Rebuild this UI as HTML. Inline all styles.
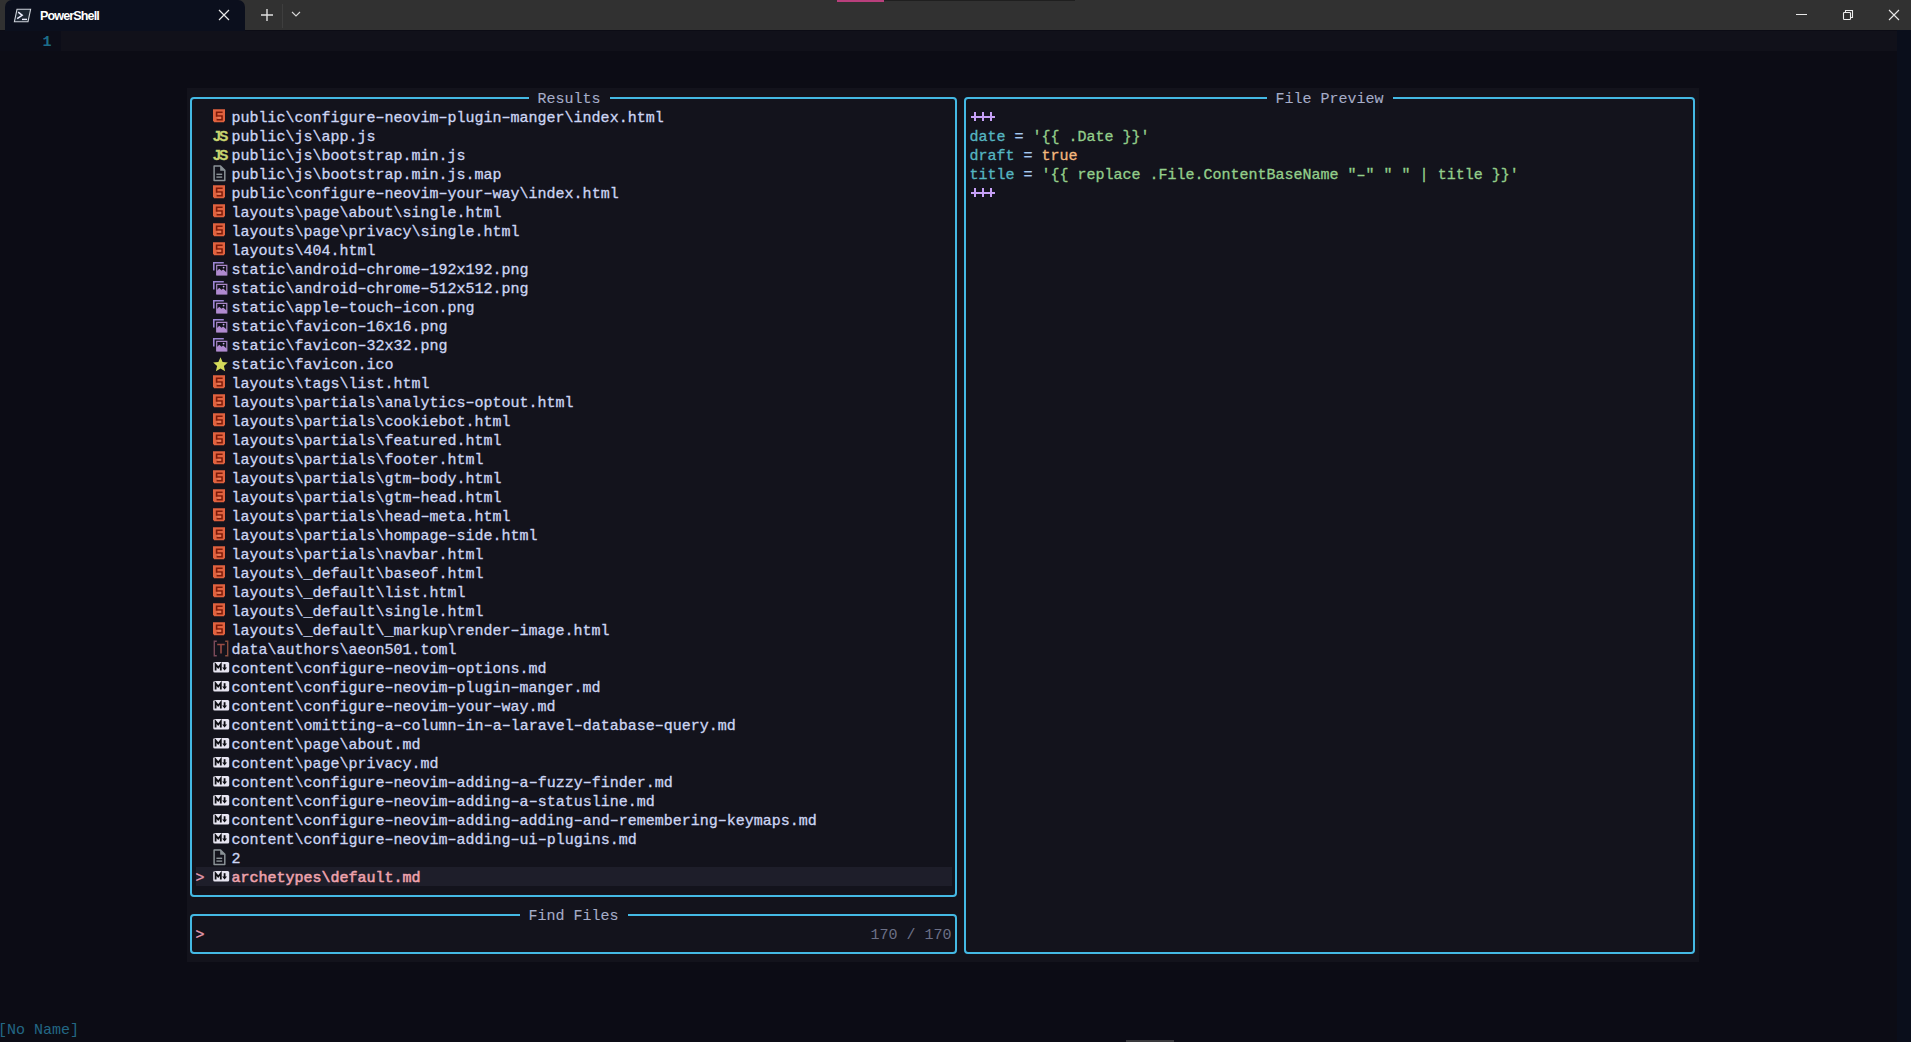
<!DOCTYPE html>
<html><head><meta charset="utf-8">
<style>
html,body{margin:0;padding:0;}
body{width:1911px;height:1042px;overflow:hidden;position:relative;background:#0c0c15;font-family:"Liberation Mono",monospace;}
.abs{position:absolute;}
.t{position:absolute;font-size:15px;line-height:19px;height:19px;white-space:pre;color:#cdd6f4;padding-top:2px;box-sizing:border-box;-webkit-text-stroke:0.3px currentColor}
.ic{position:absolute;}
.d{position:relative;top:-1px}
.bl{position:absolute;background:#3cb8e6;}
</style></head><body>
<!-- title bar -->
<div class="abs" style="left:0;top:0;width:1911px;height:30px;background:#313131"></div>
<div class="abs" style="left:837px;top:0;width:47px;height:1.5px;background:#b93f7c"></div>
<div class="abs" style="left:884px;top:0;width:191px;height:1px;background:#1f1f1f"></div>
<div class="abs" style="left:5px;top:0;width:240px;height:31px;background:#0b0f1d;border-radius:7px 7px 0 0"></div>
<svg class="abs" style="left:13px;top:8px" width="19" height="15" viewBox="0 0 19 15"><path d="M4 1.3h13.6l-2.6 12.4H1.4z" fill="#1d2633" stroke="#d0d4dc" stroke-width="1.1"/><path d="M5.2 4.2l4 3.1-5 3.4" fill="none" stroke="#eef" stroke-width="1.5"/><path d="M9 11.4h5" stroke="#eef" stroke-width="1.4"/></svg>
<div class="abs" style="left:40px;top:7.5px;font:bold 12.6px/16px 'Liberation Sans',sans-serif;color:#fff;letter-spacing:-0.9px">PowerShell</div>
<svg class="abs" style="left:218px;top:9px" width="12" height="12" viewBox="0 0 12 12"><path d="M1 1l10 10M11 1L1 11" stroke="#e8e8e8" stroke-width="1.2"/></svg>
<svg class="abs" style="left:260px;top:8px" width="14" height="14" viewBox="0 0 14 14"><path d="M7 1v12M1 7h12" stroke="#e0e0e0" stroke-width="1.4"/></svg>
<div class="abs" style="left:282px;top:4px;width:1px;height:24px;background:#3e3e3e"></div>
<svg class="abs" style="left:291px;top:11px" width="10" height="7" viewBox="0 0 10 7"><path d="M1 1l4 4 4-4" fill="none" stroke="#d8d8d8" stroke-width="1.1"/></svg>
<div class="abs" style="left:1796px;top:14px;width:11px;height:1px;background:#e8e8e8"></div>
<svg class="abs" style="left:1842px;top:9px" width="13" height="13" viewBox="0 0 13 13"><rect x="1.5" y="3.5" width="7" height="7" rx="0.8" fill="none" stroke="#ececec" stroke-width="1.1"/><path d="M3.5 3.5V1.5h7v7h-2" fill="none" stroke="#ececec" stroke-width="1.1"/></svg>
<svg class="abs" style="left:1888px;top:9px" width="12" height="12" viewBox="0 0 12 12"><path d="M1 1l10 10M11 1L1 11" stroke="#e8e8e8" stroke-width="1.1"/></svg>
<!-- cursorline -->
<div class="abs" style="left:60.5px;top:31px;width:1836px;height:20px;background:#11111a"></div>
<div class="abs" style="left:1897px;top:30px;width:14px;height:1012px;background:#0a0e1b"></div>
<div class="abs" style="left:0;top:31px;width:60.5px;height:20px;background:#0c0d18"></div>
<div class="t" style="left:42.5px;top:31px;color:#1c6d8a;font-weight:bold;-webkit-text-stroke:0">1</div>
<!-- float bg -->
<div class="abs" style="left:186.5px;top:88px;width:1512px;height:874px;background:#13131c"></div>
<!-- selection -->
<div class="abs" style="left:195.5px;top:867px;width:756px;height:19px;background:#1e1e2a"></div>
<div class="t" style="left:195.5px;top:867px;color:#e79cb0">&gt;</div>
<!-- results border -->
<div class="abs" style="left:190px;top:97px;width:763px;height:796px;border:2px solid #44b9e4;border-radius:4px"></div>
<div class="abs" style="left:528.5px;top:90px;width:81px;height:19px;background:#13131c"></div>
<div class="t" style="left:537.5px;top:88px;color:#a6adc8;-webkit-text-stroke:0.1px currentColor">Results</div>
<!-- prompt border -->
<div class="abs" style="left:190px;top:914px;width:763px;height:36px;border:2px solid #44b9e4;border-radius:4px"></div>
<div class="abs" style="left:519.5px;top:906px;width:108px;height:19px;background:#13131c"></div>
<div class="t" style="left:528.5px;top:905px;color:#a6adc8;-webkit-text-stroke:0.1px currentColor">Find Files</div>
<div class="t" style="left:195.5px;top:924px;color:#e79cb0">&gt;</div>
<div class="t" style="left:870.5px;top:924px;color:#6c7086;-webkit-text-stroke:0">170 / 170</div>
<!-- preview border -->
<div class="abs" style="left:964px;top:97px;width:727px;height:853px;border:2px solid #44b9e4;border-radius:4px"></div>
<div class="abs" style="left:1266.5px;top:90px;width:126px;height:19px;background:#13131c"></div>
<div class="t" style="left:1275.5px;top:88px;color:#a6adc8;-webkit-text-stroke:0.1px currentColor">File Preview</div>
<div class="ic" style="left:213px;top:109px;line-height:0"><svg width="13" height="15" viewBox="0 0 13 15"><path d="M0 0.3H12V11.2L11 13.2H1L0 11.2z" fill="#e0623f"/><path d="M9.6 3.2H3.6V7H9V10.6H3.6" fill="none" stroke="#7e1a08" stroke-width="1.6"/><rect x="4.4" y="7.8" width="3.8" height="2" fill="#e87a58"/></svg></div>
<div class="t" style="left:231.5px;top:107px;color:#cdd6f4;">public\configure<span class="d">–</span>neovim<span class="d">–</span>plugin<span class="d">–</span>manger\index.html</div>
<div class="ic" style="left:213px;top:126.5px"><span style="font:bold 14px/19px 'Liberation Sans',sans-serif;color:#c8d470;letter-spacing:-1.8px;-webkit-text-stroke:0.3px currentColor">JS</span></div>
<div class="t" style="left:231.5px;top:126px;color:#cdd6f4;">public\js\app.js</div>
<div class="ic" style="left:213px;top:145.5px"><span style="font:bold 14px/19px 'Liberation Sans',sans-serif;color:#c8d470;letter-spacing:-1.8px;-webkit-text-stroke:0.3px currentColor">JS</span></div>
<div class="t" style="left:231.5px;top:145px;color:#cdd6f4;">public\js\bootstrap.min.js</div>
<div class="ic" style="left:213px;top:165px;line-height:0"><svg width="13" height="17" viewBox="0 0 13 17"><path d="M1.1 1.1h6.4l4.3 4.3v10H1.1z" fill="none" stroke="#8a9296" stroke-width="1.5" stroke-linejoin="round"/><path d="M7.2 1.1v4.7h4.6z" fill="#8a9296"/><rect x="3.4" y="8.6" width="5.8" height="1.4" fill="#8a9296"/><rect x="3.4" y="11.4" width="5.8" height="1.4" fill="#8a9296"/></svg></div>
<div class="t" style="left:231.5px;top:164px;color:#cdd6f4;">public\js\bootstrap.min.js.map</div>
<div class="ic" style="left:213px;top:185px;line-height:0"><svg width="13" height="15" viewBox="0 0 13 15"><path d="M0 0.3H12V11.2L11 13.2H1L0 11.2z" fill="#e0623f"/><path d="M9.6 3.2H3.6V7H9V10.6H3.6" fill="none" stroke="#7e1a08" stroke-width="1.6"/><rect x="4.4" y="7.8" width="3.8" height="2" fill="#e87a58"/></svg></div>
<div class="t" style="left:231.5px;top:183px;color:#cdd6f4;">public\configure<span class="d">–</span>neovim<span class="d">–</span>your<span class="d">–</span>way\index.html</div>
<div class="ic" style="left:213px;top:204px;line-height:0"><svg width="13" height="15" viewBox="0 0 13 15"><path d="M0 0.3H12V11.2L11 13.2H1L0 11.2z" fill="#e0623f"/><path d="M9.6 3.2H3.6V7H9V10.6H3.6" fill="none" stroke="#7e1a08" stroke-width="1.6"/><rect x="4.4" y="7.8" width="3.8" height="2" fill="#e87a58"/></svg></div>
<div class="t" style="left:231.5px;top:202px;color:#cdd6f4;">layouts\page\about\single.html</div>
<div class="ic" style="left:213px;top:223px;line-height:0"><svg width="13" height="15" viewBox="0 0 13 15"><path d="M0 0.3H12V11.2L11 13.2H1L0 11.2z" fill="#e0623f"/><path d="M9.6 3.2H3.6V7H9V10.6H3.6" fill="none" stroke="#7e1a08" stroke-width="1.6"/><rect x="4.4" y="7.8" width="3.8" height="2" fill="#e87a58"/></svg></div>
<div class="t" style="left:231.5px;top:221px;color:#cdd6f4;">layouts\page\privacy\single.html</div>
<div class="ic" style="left:213px;top:242px;line-height:0"><svg width="13" height="15" viewBox="0 0 13 15"><path d="M0 0.3H12V11.2L11 13.2H1L0 11.2z" fill="#e0623f"/><path d="M9.6 3.2H3.6V7H9V10.6H3.6" fill="none" stroke="#7e1a08" stroke-width="1.6"/><rect x="4.4" y="7.8" width="3.8" height="2" fill="#e87a58"/></svg></div>
<div class="t" style="left:231.5px;top:240px;color:#cdd6f4;">layouts\404.html</div>
<div class="ic" style="left:213px;top:262px;line-height:0"><svg width="15" height="14" viewBox="0 0 15 14"><path d="M0.8 8.5V0.8h10" fill="none" stroke="#9d86d4" stroke-width="1.6"/><path d="M3.7 13V3.4h10.1V13z" fill="none" stroke="#ab88c8" stroke-width="1.2"/><path d="M3.7 13.3V9.2l2.6-2.4 2.1 2 1.8-1.3 3.6 3.2v2.6z" fill="#b08ad0"/><circle cx="10.6" cy="5.6" r="0.9" fill="#c0a8e8"/></svg></div>
<div class="t" style="left:231.5px;top:259px;color:#cdd6f4;">static\android<span class="d">–</span>chrome<span class="d">–</span>192x192.png</div>
<div class="ic" style="left:213px;top:281px;line-height:0"><svg width="15" height="14" viewBox="0 0 15 14"><path d="M0.8 8.5V0.8h10" fill="none" stroke="#9d86d4" stroke-width="1.6"/><path d="M3.7 13V3.4h10.1V13z" fill="none" stroke="#ab88c8" stroke-width="1.2"/><path d="M3.7 13.3V9.2l2.6-2.4 2.1 2 1.8-1.3 3.6 3.2v2.6z" fill="#b08ad0"/><circle cx="10.6" cy="5.6" r="0.9" fill="#c0a8e8"/></svg></div>
<div class="t" style="left:231.5px;top:278px;color:#cdd6f4;">static\android<span class="d">–</span>chrome<span class="d">–</span>512x512.png</div>
<div class="ic" style="left:213px;top:300px;line-height:0"><svg width="15" height="14" viewBox="0 0 15 14"><path d="M0.8 8.5V0.8h10" fill="none" stroke="#9d86d4" stroke-width="1.6"/><path d="M3.7 13V3.4h10.1V13z" fill="none" stroke="#ab88c8" stroke-width="1.2"/><path d="M3.7 13.3V9.2l2.6-2.4 2.1 2 1.8-1.3 3.6 3.2v2.6z" fill="#b08ad0"/><circle cx="10.6" cy="5.6" r="0.9" fill="#c0a8e8"/></svg></div>
<div class="t" style="left:231.5px;top:297px;color:#cdd6f4;">static\apple<span class="d">–</span>touch<span class="d">–</span>icon.png</div>
<div class="ic" style="left:213px;top:319px;line-height:0"><svg width="15" height="14" viewBox="0 0 15 14"><path d="M0.8 8.5V0.8h10" fill="none" stroke="#9d86d4" stroke-width="1.6"/><path d="M3.7 13V3.4h10.1V13z" fill="none" stroke="#ab88c8" stroke-width="1.2"/><path d="M3.7 13.3V9.2l2.6-2.4 2.1 2 1.8-1.3 3.6 3.2v2.6z" fill="#b08ad0"/><circle cx="10.6" cy="5.6" r="0.9" fill="#c0a8e8"/></svg></div>
<div class="t" style="left:231.5px;top:316px;color:#cdd6f4;">static\favicon<span class="d">–</span>16x16.png</div>
<div class="ic" style="left:213px;top:338px;line-height:0"><svg width="15" height="14" viewBox="0 0 15 14"><path d="M0.8 8.5V0.8h10" fill="none" stroke="#9d86d4" stroke-width="1.6"/><path d="M3.7 13V3.4h10.1V13z" fill="none" stroke="#ab88c8" stroke-width="1.2"/><path d="M3.7 13.3V9.2l2.6-2.4 2.1 2 1.8-1.3 3.6 3.2v2.6z" fill="#b08ad0"/><circle cx="10.6" cy="5.6" r="0.9" fill="#c0a8e8"/></svg></div>
<div class="t" style="left:231.5px;top:335px;color:#cdd6f4;">static\favicon<span class="d">–</span>32x32.png</div>
<div class="ic" style="left:213px;top:356.5px;line-height:0"><svg width="15" height="15" viewBox="0 0 15 15"><path d="M7.5 0.2l2.1 4.8 5.2 0.5-3.9 3.4 1.2 5.3-4.6-2.8-4.6 2.8 1.2-5.3L0.2 5.5l5.2-0.5z" fill="#d4da5a"/></svg></div>
<div class="t" style="left:231.5px;top:354px;color:#cdd6f4;">static\favicon.ico</div>
<div class="ic" style="left:213px;top:375px;line-height:0"><svg width="13" height="15" viewBox="0 0 13 15"><path d="M0 0.3H12V11.2L11 13.2H1L0 11.2z" fill="#e0623f"/><path d="M9.6 3.2H3.6V7H9V10.6H3.6" fill="none" stroke="#7e1a08" stroke-width="1.6"/><rect x="4.4" y="7.8" width="3.8" height="2" fill="#e87a58"/></svg></div>
<div class="t" style="left:231.5px;top:373px;color:#cdd6f4;">layouts\tags\list.html</div>
<div class="ic" style="left:213px;top:394px;line-height:0"><svg width="13" height="15" viewBox="0 0 13 15"><path d="M0 0.3H12V11.2L11 13.2H1L0 11.2z" fill="#e0623f"/><path d="M9.6 3.2H3.6V7H9V10.6H3.6" fill="none" stroke="#7e1a08" stroke-width="1.6"/><rect x="4.4" y="7.8" width="3.8" height="2" fill="#e87a58"/></svg></div>
<div class="t" style="left:231.5px;top:392px;color:#cdd6f4;">layouts\partials\analytics<span class="d">–</span>optout.html</div>
<div class="ic" style="left:213px;top:413px;line-height:0"><svg width="13" height="15" viewBox="0 0 13 15"><path d="M0 0.3H12V11.2L11 13.2H1L0 11.2z" fill="#e0623f"/><path d="M9.6 3.2H3.6V7H9V10.6H3.6" fill="none" stroke="#7e1a08" stroke-width="1.6"/><rect x="4.4" y="7.8" width="3.8" height="2" fill="#e87a58"/></svg></div>
<div class="t" style="left:231.5px;top:411px;color:#cdd6f4;">layouts\partials\cookiebot.html</div>
<div class="ic" style="left:213px;top:432px;line-height:0"><svg width="13" height="15" viewBox="0 0 13 15"><path d="M0 0.3H12V11.2L11 13.2H1L0 11.2z" fill="#e0623f"/><path d="M9.6 3.2H3.6V7H9V10.6H3.6" fill="none" stroke="#7e1a08" stroke-width="1.6"/><rect x="4.4" y="7.8" width="3.8" height="2" fill="#e87a58"/></svg></div>
<div class="t" style="left:231.5px;top:430px;color:#cdd6f4;">layouts\partials\featured.html</div>
<div class="ic" style="left:213px;top:451px;line-height:0"><svg width="13" height="15" viewBox="0 0 13 15"><path d="M0 0.3H12V11.2L11 13.2H1L0 11.2z" fill="#e0623f"/><path d="M9.6 3.2H3.6V7H9V10.6H3.6" fill="none" stroke="#7e1a08" stroke-width="1.6"/><rect x="4.4" y="7.8" width="3.8" height="2" fill="#e87a58"/></svg></div>
<div class="t" style="left:231.5px;top:449px;color:#cdd6f4;">layouts\partials\footer.html</div>
<div class="ic" style="left:213px;top:470px;line-height:0"><svg width="13" height="15" viewBox="0 0 13 15"><path d="M0 0.3H12V11.2L11 13.2H1L0 11.2z" fill="#e0623f"/><path d="M9.6 3.2H3.6V7H9V10.6H3.6" fill="none" stroke="#7e1a08" stroke-width="1.6"/><rect x="4.4" y="7.8" width="3.8" height="2" fill="#e87a58"/></svg></div>
<div class="t" style="left:231.5px;top:468px;color:#cdd6f4;">layouts\partials\gtm<span class="d">–</span>body.html</div>
<div class="ic" style="left:213px;top:489px;line-height:0"><svg width="13" height="15" viewBox="0 0 13 15"><path d="M0 0.3H12V11.2L11 13.2H1L0 11.2z" fill="#e0623f"/><path d="M9.6 3.2H3.6V7H9V10.6H3.6" fill="none" stroke="#7e1a08" stroke-width="1.6"/><rect x="4.4" y="7.8" width="3.8" height="2" fill="#e87a58"/></svg></div>
<div class="t" style="left:231.5px;top:487px;color:#cdd6f4;">layouts\partials\gtm<span class="d">–</span>head.html</div>
<div class="ic" style="left:213px;top:508px;line-height:0"><svg width="13" height="15" viewBox="0 0 13 15"><path d="M0 0.3H12V11.2L11 13.2H1L0 11.2z" fill="#e0623f"/><path d="M9.6 3.2H3.6V7H9V10.6H3.6" fill="none" stroke="#7e1a08" stroke-width="1.6"/><rect x="4.4" y="7.8" width="3.8" height="2" fill="#e87a58"/></svg></div>
<div class="t" style="left:231.5px;top:506px;color:#cdd6f4;">layouts\partials\head<span class="d">–</span>meta.html</div>
<div class="ic" style="left:213px;top:527px;line-height:0"><svg width="13" height="15" viewBox="0 0 13 15"><path d="M0 0.3H12V11.2L11 13.2H1L0 11.2z" fill="#e0623f"/><path d="M9.6 3.2H3.6V7H9V10.6H3.6" fill="none" stroke="#7e1a08" stroke-width="1.6"/><rect x="4.4" y="7.8" width="3.8" height="2" fill="#e87a58"/></svg></div>
<div class="t" style="left:231.5px;top:525px;color:#cdd6f4;">layouts\partials\hompage<span class="d">–</span>side.html</div>
<div class="ic" style="left:213px;top:546px;line-height:0"><svg width="13" height="15" viewBox="0 0 13 15"><path d="M0 0.3H12V11.2L11 13.2H1L0 11.2z" fill="#e0623f"/><path d="M9.6 3.2H3.6V7H9V10.6H3.6" fill="none" stroke="#7e1a08" stroke-width="1.6"/><rect x="4.4" y="7.8" width="3.8" height="2" fill="#e87a58"/></svg></div>
<div class="t" style="left:231.5px;top:544px;color:#cdd6f4;">layouts\partials\navbar.html</div>
<div class="ic" style="left:213px;top:565px;line-height:0"><svg width="13" height="15" viewBox="0 0 13 15"><path d="M0 0.3H12V11.2L11 13.2H1L0 11.2z" fill="#e0623f"/><path d="M9.6 3.2H3.6V7H9V10.6H3.6" fill="none" stroke="#7e1a08" stroke-width="1.6"/><rect x="4.4" y="7.8" width="3.8" height="2" fill="#e87a58"/></svg></div>
<div class="t" style="left:231.5px;top:563px;color:#cdd6f4;">layouts\_default\baseof.html</div>
<div class="ic" style="left:213px;top:584px;line-height:0"><svg width="13" height="15" viewBox="0 0 13 15"><path d="M0 0.3H12V11.2L11 13.2H1L0 11.2z" fill="#e0623f"/><path d="M9.6 3.2H3.6V7H9V10.6H3.6" fill="none" stroke="#7e1a08" stroke-width="1.6"/><rect x="4.4" y="7.8" width="3.8" height="2" fill="#e87a58"/></svg></div>
<div class="t" style="left:231.5px;top:582px;color:#cdd6f4;">layouts\_default\list.html</div>
<div class="ic" style="left:213px;top:603px;line-height:0"><svg width="13" height="15" viewBox="0 0 13 15"><path d="M0 0.3H12V11.2L11 13.2H1L0 11.2z" fill="#e0623f"/><path d="M9.6 3.2H3.6V7H9V10.6H3.6" fill="none" stroke="#7e1a08" stroke-width="1.6"/><rect x="4.4" y="7.8" width="3.8" height="2" fill="#e87a58"/></svg></div>
<div class="t" style="left:231.5px;top:601px;color:#cdd6f4;">layouts\_default\single.html</div>
<div class="ic" style="left:213px;top:622px;line-height:0"><svg width="13" height="15" viewBox="0 0 13 15"><path d="M0 0.3H12V11.2L11 13.2H1L0 11.2z" fill="#e0623f"/><path d="M9.6 3.2H3.6V7H9V10.6H3.6" fill="none" stroke="#7e1a08" stroke-width="1.6"/><rect x="4.4" y="7.8" width="3.8" height="2" fill="#e87a58"/></svg></div>
<div class="t" style="left:231.5px;top:620px;color:#cdd6f4;">layouts\_default\_markup\render<span class="d">–</span>image.html</div>
<div class="ic" style="left:213px;top:640px;line-height:0"><svg width="16" height="17" viewBox="0 0 16 17"><path d="M3.8 1.3H1.3v14.5h2.5" fill="none" stroke="#7a4a5a" stroke-width="1.4"/><path d="M12.2 1.3h2.5v14.5h-2.5" fill="none" stroke="#8a4e3e" stroke-width="1.4"/><path d="M4.2 4.5h7.5M8 4.5v9" fill="none" stroke="#9a4c44" stroke-width="1.6"/></svg></div>
<div class="t" style="left:231.5px;top:639px;color:#cdd6f4;">data\authors\aeon501.toml</div>
<div class="ic" style="left:213px;top:662px;line-height:0"><svg width="17" height="12" viewBox="0 0 17 12"><rect x="0.2" y="0.1" width="16" height="10.5" rx="1.5" fill="#e6e4f0"/><path d="M2.6 8.6V2.4l2.6 3.1 2.6-3.1v6.2" fill="none" stroke="#0d0d12" stroke-width="1.8" stroke-linejoin="miter"/><path d="M11.6 2.2v3.8" stroke="#0d0d12" stroke-width="1.8"/><path d="M9.2 5.4l2.4 3.2 2.4-3.2z" fill="#0d0d12"/></svg></div>
<div class="t" style="left:231.5px;top:658px;color:#cdd6f4;">content\configure<span class="d">–</span>neovim<span class="d">–</span>options.md</div>
<div class="ic" style="left:213px;top:681px;line-height:0"><svg width="17" height="12" viewBox="0 0 17 12"><rect x="0.2" y="0.1" width="16" height="10.5" rx="1.5" fill="#e6e4f0"/><path d="M2.6 8.6V2.4l2.6 3.1 2.6-3.1v6.2" fill="none" stroke="#0d0d12" stroke-width="1.8" stroke-linejoin="miter"/><path d="M11.6 2.2v3.8" stroke="#0d0d12" stroke-width="1.8"/><path d="M9.2 5.4l2.4 3.2 2.4-3.2z" fill="#0d0d12"/></svg></div>
<div class="t" style="left:231.5px;top:677px;color:#cdd6f4;">content\configure<span class="d">–</span>neovim<span class="d">–</span>plugin<span class="d">–</span>manger.md</div>
<div class="ic" style="left:213px;top:700px;line-height:0"><svg width="17" height="12" viewBox="0 0 17 12"><rect x="0.2" y="0.1" width="16" height="10.5" rx="1.5" fill="#e6e4f0"/><path d="M2.6 8.6V2.4l2.6 3.1 2.6-3.1v6.2" fill="none" stroke="#0d0d12" stroke-width="1.8" stroke-linejoin="miter"/><path d="M11.6 2.2v3.8" stroke="#0d0d12" stroke-width="1.8"/><path d="M9.2 5.4l2.4 3.2 2.4-3.2z" fill="#0d0d12"/></svg></div>
<div class="t" style="left:231.5px;top:696px;color:#cdd6f4;">content\configure<span class="d">–</span>neovim<span class="d">–</span>your<span class="d">–</span>way.md</div>
<div class="ic" style="left:213px;top:719px;line-height:0"><svg width="17" height="12" viewBox="0 0 17 12"><rect x="0.2" y="0.1" width="16" height="10.5" rx="1.5" fill="#e6e4f0"/><path d="M2.6 8.6V2.4l2.6 3.1 2.6-3.1v6.2" fill="none" stroke="#0d0d12" stroke-width="1.8" stroke-linejoin="miter"/><path d="M11.6 2.2v3.8" stroke="#0d0d12" stroke-width="1.8"/><path d="M9.2 5.4l2.4 3.2 2.4-3.2z" fill="#0d0d12"/></svg></div>
<div class="t" style="left:231.5px;top:715px;color:#cdd6f4;">content\omitting<span class="d">–</span>a<span class="d">–</span>column<span class="d">–</span>in<span class="d">–</span>a<span class="d">–</span>laravel<span class="d">–</span>database<span class="d">–</span>query.md</div>
<div class="ic" style="left:213px;top:738px;line-height:0"><svg width="17" height="12" viewBox="0 0 17 12"><rect x="0.2" y="0.1" width="16" height="10.5" rx="1.5" fill="#e6e4f0"/><path d="M2.6 8.6V2.4l2.6 3.1 2.6-3.1v6.2" fill="none" stroke="#0d0d12" stroke-width="1.8" stroke-linejoin="miter"/><path d="M11.6 2.2v3.8" stroke="#0d0d12" stroke-width="1.8"/><path d="M9.2 5.4l2.4 3.2 2.4-3.2z" fill="#0d0d12"/></svg></div>
<div class="t" style="left:231.5px;top:734px;color:#cdd6f4;">content\page\about.md</div>
<div class="ic" style="left:213px;top:757px;line-height:0"><svg width="17" height="12" viewBox="0 0 17 12"><rect x="0.2" y="0.1" width="16" height="10.5" rx="1.5" fill="#e6e4f0"/><path d="M2.6 8.6V2.4l2.6 3.1 2.6-3.1v6.2" fill="none" stroke="#0d0d12" stroke-width="1.8" stroke-linejoin="miter"/><path d="M11.6 2.2v3.8" stroke="#0d0d12" stroke-width="1.8"/><path d="M9.2 5.4l2.4 3.2 2.4-3.2z" fill="#0d0d12"/></svg></div>
<div class="t" style="left:231.5px;top:753px;color:#cdd6f4;">content\page\privacy.md</div>
<div class="ic" style="left:213px;top:776px;line-height:0"><svg width="17" height="12" viewBox="0 0 17 12"><rect x="0.2" y="0.1" width="16" height="10.5" rx="1.5" fill="#e6e4f0"/><path d="M2.6 8.6V2.4l2.6 3.1 2.6-3.1v6.2" fill="none" stroke="#0d0d12" stroke-width="1.8" stroke-linejoin="miter"/><path d="M11.6 2.2v3.8" stroke="#0d0d12" stroke-width="1.8"/><path d="M9.2 5.4l2.4 3.2 2.4-3.2z" fill="#0d0d12"/></svg></div>
<div class="t" style="left:231.5px;top:772px;color:#cdd6f4;">content\configure<span class="d">–</span>neovim<span class="d">–</span>adding<span class="d">–</span>a<span class="d">–</span>fuzzy<span class="d">–</span>finder.md</div>
<div class="ic" style="left:213px;top:795px;line-height:0"><svg width="17" height="12" viewBox="0 0 17 12"><rect x="0.2" y="0.1" width="16" height="10.5" rx="1.5" fill="#e6e4f0"/><path d="M2.6 8.6V2.4l2.6 3.1 2.6-3.1v6.2" fill="none" stroke="#0d0d12" stroke-width="1.8" stroke-linejoin="miter"/><path d="M11.6 2.2v3.8" stroke="#0d0d12" stroke-width="1.8"/><path d="M9.2 5.4l2.4 3.2 2.4-3.2z" fill="#0d0d12"/></svg></div>
<div class="t" style="left:231.5px;top:791px;color:#cdd6f4;">content\configure<span class="d">–</span>neovim<span class="d">–</span>adding<span class="d">–</span>a<span class="d">–</span>statusline.md</div>
<div class="ic" style="left:213px;top:814px;line-height:0"><svg width="17" height="12" viewBox="0 0 17 12"><rect x="0.2" y="0.1" width="16" height="10.5" rx="1.5" fill="#e6e4f0"/><path d="M2.6 8.6V2.4l2.6 3.1 2.6-3.1v6.2" fill="none" stroke="#0d0d12" stroke-width="1.8" stroke-linejoin="miter"/><path d="M11.6 2.2v3.8" stroke="#0d0d12" stroke-width="1.8"/><path d="M9.2 5.4l2.4 3.2 2.4-3.2z" fill="#0d0d12"/></svg></div>
<div class="t" style="left:231.5px;top:810px;color:#cdd6f4;">content\configure<span class="d">–</span>neovim<span class="d">–</span>adding<span class="d">–</span>adding<span class="d">–</span>and<span class="d">–</span>remembering<span class="d">–</span>keymaps.md</div>
<div class="ic" style="left:213px;top:833px;line-height:0"><svg width="17" height="12" viewBox="0 0 17 12"><rect x="0.2" y="0.1" width="16" height="10.5" rx="1.5" fill="#e6e4f0"/><path d="M2.6 8.6V2.4l2.6 3.1 2.6-3.1v6.2" fill="none" stroke="#0d0d12" stroke-width="1.8" stroke-linejoin="miter"/><path d="M11.6 2.2v3.8" stroke="#0d0d12" stroke-width="1.8"/><path d="M9.2 5.4l2.4 3.2 2.4-3.2z" fill="#0d0d12"/></svg></div>
<div class="t" style="left:231.5px;top:829px;color:#cdd6f4;">content\configure<span class="d">–</span>neovim<span class="d">–</span>adding<span class="d">–</span>ui<span class="d">–</span>plugins.md</div>
<div class="ic" style="left:213px;top:849px;line-height:0"><svg width="13" height="17" viewBox="0 0 13 17"><path d="M1.1 1.1h6.4l4.3 4.3v10H1.1z" fill="none" stroke="#8a9296" stroke-width="1.5" stroke-linejoin="round"/><path d="M7.2 1.1v4.7h4.6z" fill="#8a9296"/><rect x="3.4" y="8.6" width="5.8" height="1.4" fill="#8a9296"/><rect x="3.4" y="11.4" width="5.8" height="1.4" fill="#8a9296"/></svg></div>
<div class="t" style="left:231.5px;top:848px;color:#cdd6f4;">2</div>
<div class="ic" style="left:213px;top:871px;line-height:0"><svg width="17" height="12" viewBox="0 0 17 12"><rect x="0.2" y="0.1" width="16" height="10.5" rx="1.5" fill="#e6e4f0"/><path d="M2.6 8.6V2.4l2.6 3.1 2.6-3.1v6.2" fill="none" stroke="#0d0d12" stroke-width="1.8" stroke-linejoin="miter"/><path d="M11.6 2.2v3.8" stroke="#0d0d12" stroke-width="1.8"/><path d="M9.2 5.4l2.4 3.2 2.4-3.2z" fill="#0d0d12"/></svg></div>
<div class="t" style="left:231.5px;top:867px;color:#eea3ad;-webkit-text-stroke:0.55px currentColor;">archetypes\default.md</div>
<div class="t" style="left:969.5px;top:107px"><span style="color:#c6a0f6"></span></div>
<div class="t" style="left:969.5px;top:126px"><span style="color:#56b6c2">date</span><span style="color:#cdd6f4"> </span><span style="color:#a5c8ee">=</span><span style="color:#cdd6f4"> </span><span style="color:#93cf8b">&#x27;{{ .Date }}&#x27;</span></div>
<div class="t" style="left:969.5px;top:145px"><span style="color:#56b6c2">draft</span><span style="color:#cdd6f4"> </span><span style="color:#a5c8ee">=</span><span style="color:#cdd6f4"> </span><span style="color:#f5b97f">true</span></div>
<div class="t" style="left:969.5px;top:164px"><span style="color:#56b6c2">title</span><span style="color:#cdd6f4"> </span><span style="color:#a5c8ee">=</span><span style="color:#cdd6f4"> </span><span style="color:#93cf8b">&#x27;{{ replace .File.ContentBaseName &quot;–&quot; &quot; &quot; | title }}&#x27;</span></div>
<div class="t" style="left:969.5px;top:183px"><span style="color:#c6a0f6"></span></div>
<div class="abs" style="left:971px;top:116px;width:24px;height:2px;background:#c6a0f6"></div>
<div class="abs" style="left:974px;top:112px;width:2px;height:9px;background:#c6a0f6"></div>
<div class="abs" style="left:982px;top:112px;width:2px;height:9px;background:#c6a0f6"></div>
<div class="abs" style="left:990px;top:112px;width:2px;height:9px;background:#c6a0f6"></div>
<div class="abs" style="left:971px;top:192px;width:24px;height:2px;background:#c6a0f6"></div>
<div class="abs" style="left:974px;top:188px;width:2px;height:9px;background:#c6a0f6"></div>
<div class="abs" style="left:982px;top:188px;width:2px;height:9px;background:#c6a0f6"></div>
<div class="abs" style="left:990px;top:188px;width:2px;height:9px;background:#c6a0f6"></div>
<div class="t" style="left:-2px;top:1019px;color:#236784;-webkit-text-stroke:0">[No Name]</div>
<div class="abs" style="left:1126px;top:1040px;width:48px;height:2px;background:#3a3a3e"></div>
</body></html>
